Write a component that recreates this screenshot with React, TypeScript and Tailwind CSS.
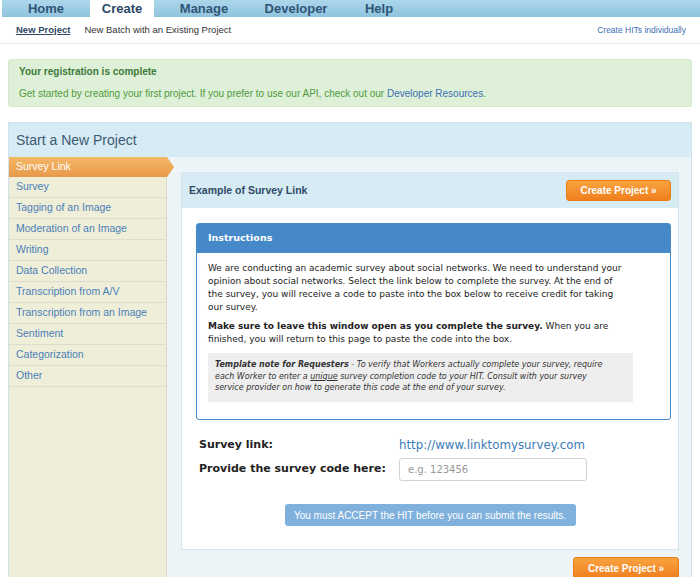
const tabs = [
  { label: "Home", w: "w-[88px]" },
  { label: "Create", w: "w-[64px]", active: true },
  { label: "Manage", w: "w-[100px]" },
  { label: "Developer", w: "w-[84px]" },
  { label: "Help", w: "w-[82px]" },
];

const projectTypes = [
  "Survey",
  "Tagging of an Image",
  "Moderation of an Image",
  "Writing",
  "Data Collection",
  "Transcription from A/V",
  "Transcription from an Image",
  "Sentiment",
  "Categorization",
  "Other",
];

const verdana = "font-['DejaVu_Sans',Verdana,sans-serif]";

/* ─── Top navigation ─────────────────────────────────────────────── */

function TopNav() {
  return (
    <div className="ml-[2px] flex h-[17px] bg-gradient-to-b from-[#acd7eb] to-[#8fc3dd]">
      {tabs.map((t) =>
        t.active ? (
          <div
            key={t.label}
            className={`${t.w} flex items-center justify-center bg-white text-[13px] font-bold text-[#2a4866]`}
          >
            {t.label}
          </div>
        ) : (
          <div
            key={t.label}
            className={`${t.w} flex items-center justify-center text-[13px] font-bold text-[#2f5577]`}
          >
            {t.label}
          </div>
        )
      )}
    </div>
  );
}

function SubNav() {
  return (
    <div className="flex h-[27px] items-center border-b border-[#e6e6e6] pl-[16px] pr-[14px] text-[9.5px]">
      <span className="font-bold text-[#2f4a66] underline">New Project</span>
      <span className="ml-[14px] text-[#333]">New Batch with an Existing Project</span>
      <span className="ml-auto text-[8.5px] text-[#3a6fb4]">Create HITs individually</span>
    </div>
  );
}

function Alert() {
  return (
    <div className="mx-[8px] mt-[15px] flex h-[48px] flex-col justify-center gap-[10px] rounded-[3px] border border-[#d3e8c9] bg-[#dff0d8] pb-[1px] pl-[10px] text-[10px] leading-[12px]">
      <div className="font-bold text-[#3b7a3b]">Your registration is complete</div>
      <div className="text-[#4f9a3f]">
        Get started by creating your first project. If you prefer to use our API, check out our{" "}
        <span className="text-[#3b6fb5]">Developer Resources</span>.
      </div>
    </div>
  );
}

/* ─── Sidebar ────────────────────────────────────────────────────── */

function Sidebar() {
  return (
    <div className="w-[158px] shrink-0 border-r border-[#dcdac6] bg-[#efeed9]">
      <div className="relative z-10 flex h-[20px] w-[165px] items-center bg-gradient-to-b from-[#f4b766] to-[#e8994a] pl-[7px] text-[10.5px] text-white [clip-path:polygon(0_0,calc(100%-7px)_0,100%_50%,calc(100%-7px)_100%,0_100%)]">
        Survey Link
      </div>
      {projectTypes.map((p) => (
        <div
          key={p}
          className="flex h-[21px] items-center border-b border-[#dcdcd0] pl-[7px] text-[10.5px] text-[#4a7fb8]"
        >
          {p}
        </div>
      ))}
    </div>
  );
}

/* ─── Survey example ─────────────────────────────────────────────── */

function Instructions() {
  return (
    <div className={`rounded-[3px] border border-[#4589c9] ${verdana}`}>
      <div className="flex h-[29px] items-center bg-[#4589c9] pl-[11px] text-[9.5px] font-bold text-white">
        Instructions
      </div>
      <div className="pb-[17px] pl-[11px] pr-[44px] pt-[9px] text-[9px] leading-[13px] text-[#222]">
        <p>
          We are conducting an academic survey about social networks. We need to understand your
          opinion about social networks. Select the link below to complete the survey. At the end of
          the survey, you will receive a code to paste into the box below to receive credit for taking
          our survey.
        </p>
        <p className="mt-[6px]">
          <b>Make sure to leave this window open as you complete the survey.</b> When you are
          finished, you will return to this page to paste the code into the box.
        </p>
        <div className="mr-[-7px] mt-[7px] bg-[#eeeeee] pb-[8px] pl-[7px] pr-[18px] pt-[6px] text-[8px] italic leading-[11.5px] text-[#333]">
          <b>Template note for Requesters</b> - To verify that Workers actually complete your survey,
          require each Worker to enter a <span className="underline">unique</span> survey completion
          code to your HIT. Consult with your survey service provider on how to generate this code at
          the end of your survey.
        </div>
      </div>
    </div>
  );
}

function OrangeButton({ className = "" }: { className?: string }) {
  return (
    <button
      className={`rounded-[3px] border border-[#ea7d16] bg-gradient-to-b from-[#f9a23f] to-[#f07f1c] text-[10px] font-bold text-white ${className}`}
    >
      Create Project »
    </button>
  );
}

function SurveyCard() {
  return (
    <div className="border border-[#d4e5ee] bg-white">
      <div className="flex h-[35px] items-center justify-between bg-[#d6ebf4] pl-[7px] pr-[7px]">
        <span className="text-[10.5px] font-bold text-[#2f4a66]">Example of Survey Link</span>
        <OrangeButton className="h-[21px] w-[105px]" />
      </div>
      <div className="pb-[23px] pl-[14px] pr-[7px] pt-[15px]">
        <Instructions />
        <div
          className={`mt-[17px] grid grid-cols-[200px_1fr] items-center gap-y-[4px] pl-[3px] text-[11px] ${verdana}`}
        >
          <div className="font-bold text-[#222]">Survey link:</div>
          <div className="text-[11.8px] text-[#3a7ab8]">http://www.linktomysurvey.com</div>
          <div className="font-bold text-[#222]">Provide the survey code here:</div>
          <div className="flex h-[23px] w-[188px] items-center rounded-[3px] border border-[#d2d2d2] pl-[8px] text-[10px] text-[#999]">
            e.g. 123456
          </div>
        </div>
        <div className="mt-[23px] flex justify-center pr-[7px]">
          <div className="flex h-[22px] w-[291px] items-center justify-center rounded-[3px] bg-[#80b1dc] text-[10px] text-white">
            You must ACCEPT the HIT before you can submit the results.
          </div>
        </div>
      </div>
    </div>
  );
}

export default function App() {
  return (
    <div className="min-h-[577px] overflow-hidden bg-white font-['Liberation_Sans',Arial,sans-serif]">
      <TopNav />
      <SubNav />
      <Alert />
      <div className="mx-[8px] mt-[15px] border border-[#d0e2eb]">
        <div className="flex h-[34px] items-center bg-[#d6ebf4] pl-[7px] text-[14px] text-[#3d5a73]">
          Start a New Project
        </div>
        <div className="flex h-[430px]">
          <Sidebar />
          <div className="flex-1 bg-[#ecf4f8] pl-[14px] pr-[12px] pt-[15px]">
            <SurveyCard />
            <div className="mt-[7px] flex justify-end">
              <OrangeButton className="h-[22px] w-[106px]" />
            </div>
          </div>
        </div>
      </div>
    </div>
  );
}
